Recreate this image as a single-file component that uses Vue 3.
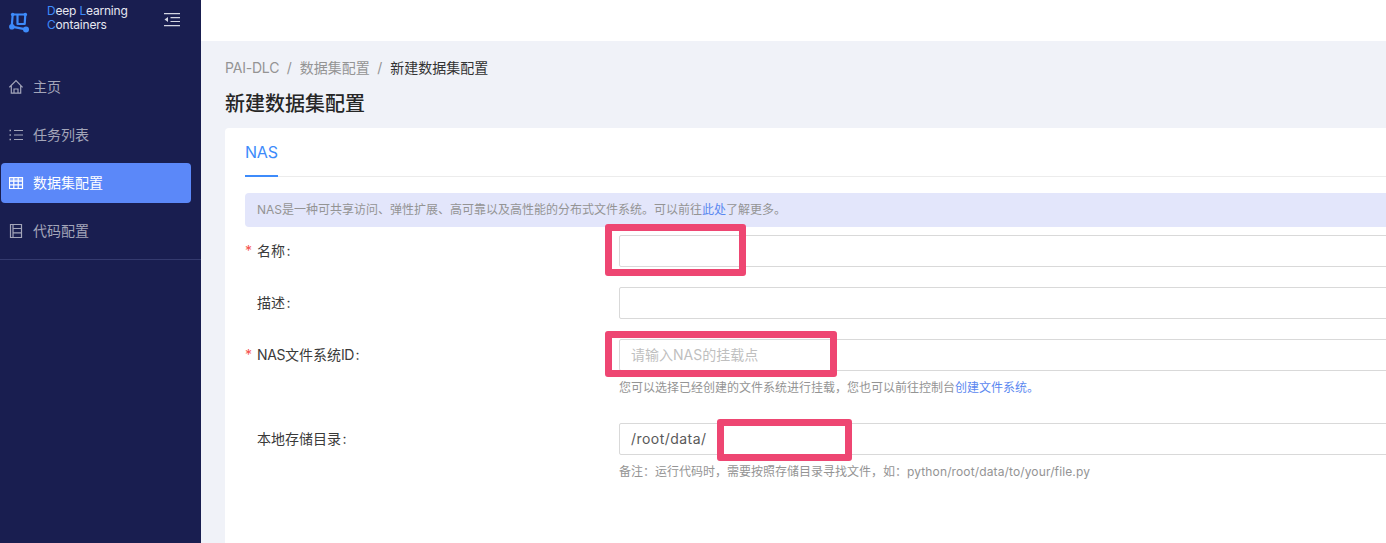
<script setup>
const menu = [
  { label: '主页', icon: 'home' },
  { label: '任务列表', icon: 'list' },
  { label: '数据集配置', icon: 'table', active: true },
  { label: '代码配置', icon: 'book' }
]
</script>

<template>
  <div class="page">
    <aside class="side">
      <div class="brand">
        <svg class="logo" width="20" height="22" viewBox="0 0 20 22" fill="none" stroke="#3d8bfb" stroke-width="2.200">
          <path d="M2.700 14.700 L3.700 2.500 L16.300 2.500 L15.700 12 H8.500 V2.500" stroke-linejoin="round" />
          <path d="M2.700 14.700 L17 17.300" />
          <circle cx="2.900" cy="14.700" r="2.800" fill="#3d8bfb" stroke="none" />
          <circle cx="17" cy="17.500" r="3" fill="#3d8bfb" stroke="none" />
          <circle cx="3.700" cy="2.500" r="1.800" fill="#3d8bfb" stroke="none" />
          <circle cx="16.300" cy="2.500" r="1.800" fill="#3d8bfb" stroke="none" />
        </svg>
        <div class="brand-text">
          <div><b>D</b>eep <b>L</b>earning</div>
          <div><b>C</b>ontainers</div>
        </div>
        <svg class="fold" width="16" height="14" viewBox="0 0 16 14" fill="none" stroke="#d3d5e2" stroke-width="1.200">
          <path d="M0 0.700H16M6.500 4.600H16M6.500 8.500H16M0 12.700H16" />
          <path d="M4 4V9L0.500 6.500Z" fill="#d3d5e2" stroke="none" />
        </svg>
      </div>
      <nav class="menu">
        <div v-for="m in menu" :key="m.label" class="item" :class="{ active: m.active }">
          <svg width="16" height="16" viewBox="0 0 16 16" fill="none" stroke="currentColor" stroke-width="1.200">
            <template v-if="m.icon === 'home'">
              <path d="M0.400 8.300 L7 1.500 L13.600 8.300 M2.300 6.800 V14.200 H11.700 V6.800 M5 14.200 V10 H9 V14.200" />
            </template>
            <template v-else-if="m.icon === 'list'">
              <path d="M5 3.500H14M5 8H14M5 12.500H14" />
              <path d="M0.500 3.500H2M0.500 8H2M0.500 12.500H2" stroke-width="1.500" />
            </template>
            <template v-else-if="m.icon === 'table'">
              <path d="M0.500 2.500H13.500V13.500H0.500ZM0.500 6.200H13.500M0.500 9.800H13.500M4.800 2.500V13.500M9.200 2.500V13.500" />
              <rect x="0.500" y="2.500" width="13" height="3.700" fill="currentColor" opacity=".35" stroke="none" />
            </template>
            <template v-else>
              <path d="M1.500 1.500H12.500V14.500H1.500ZM4 1.500V14.500M4 5.500H12.500M4 9.800H12.500" />
            </template>
          </svg>
          <span class="item-label">{{ m.label }}</span>
        </div>
      </nav>
      <div class="side-line"></div>
    </aside>

    <div class="main">
      <header class="top"></header>
      <div class="content">
        <div class="crumbs">
          <span>PAI-DLC</span><i>/</i><span>数据集配置</span><i>/</i><span class="cur">新建数据集配置</span>
        </div>
        <h1>新建数据集配置</h1>
        <section class="card">
          <div class="tabs"><div class="tab">NAS</div></div>
          <div class="alert">NAS是一种可共享访问、弹性扩展、高可靠以及高性能的分布式文件系统。可以前往<a>此处</a>了解更多。</div>

          <div class="row">
            <label><em>*</em>名称<s>:</s></label>
            <div class="field">
              <div class="input"></div>
              <div class="mark m1"></div>
            </div>
          </div>
          <div class="row">
            <label class="plain">描述<s>:</s></label>
            <div class="field"><div class="input"></div></div>
          </div>
          <div class="row with-help">
            <label><em>*</em><span class="tight">NAS</span>文件系统<span class="tight">ID</span><s>:</s></label>
            <div class="field">
              <div class="input ph">请输入NAS的挂载点</div>
              <div class="mark m3"></div>
              <p class="help">您可以选择已经创建的文件系统进行挂载，您也可以前往控制台<a>创建文件系统。</a></p>
            </div>
          </div>
          <div class="row">
            <label class="plain">本地存储目录<s>:</s></label>
            <div class="field">
              <div class="input val">/root/data/</div>
              <div class="mark m4"></div>
              <p class="help">备注：运行代码时，需要按照存储目录寻找文件，如：<span class="path">python/root/data/to/your/file.py</span></p>
            </div>
          </div>
        </section>
      </div>
    </div>
  </div>
</template>

<style>
html, body { margin: 0; overflow: hidden; }
</style>

<style scoped>
.page {
  display: flex;
  width: 1386px;
  height: 543px;
  overflow: hidden;
  font-family: Inter, "Noto Sans CJK SC", sans-serif;
  font-size: 14px;
  color: #333;
}
.side {
  flex: 0 0 201px;
  background: #191e50;
  color: #fff;
}
.brand {
  display: flex;
  align-items: flex-start;
  height: 41px;
}
.logo { margin: 12px 0 0 9px; }
.brand-text {
  margin: 4px 0 0 18px;
  font-size: 12px;
  line-height: 14px;
  letter-spacing: -0.2px;
  color: #e6e8f2;
  width: 117px;
}
.brand-text b { font-weight: 400; color: #3d8bfb; }
.fold { margin-top: 13px; }
.menu {
  margin-top: 26px;
  padding: 0 10px 0 1px;
}
.item {
  display: flex;
  align-items: center;
  height: 40px;
  margin-bottom: 8px;
  padding-left: 8px;
  gap: 8px;
  font-size: 14px;
  color: #a3a5b9;
  border-radius: 4px;
}
.item-label { padding-bottom: 2px; }
.item.active { background: #5b88f9; color: #fff; }
.side-line { height: 1px; background: #343a6e; margin-top: 5px; }
.main {
  flex: 1;
  min-width: 0;
  background: #f0f2f8;
}
.top { height: 41px; background: #fff; }
.content { padding: 18px 0 0 24px; width: 1500px; }
.crumbs {
  display: flex;
  height: 18px;
  line-height: 18px;
  font-size: 14px;
  color: #949494;
}
.crumbs span:first-child { letter-spacing: -0.2px; }
.crumbs i { font-style: normal; margin: 0 8px 0 7.500px; }
.crumbs .cur { color: #333; }
h1 {
  margin: 11px 0 0;
  height: 32px;
  line-height: 32px;
  font-size: 20px;
  font-weight: 500;
  color: #262626;
}
.card {
  margin-top: 8px;
  height: 500px;
  background: #fff;
  border-radius: 4px;
  padding: 0 20px;
}
.tabs {
  display: flex;
  height: 48px;
  border-bottom: 1px solid #ececec;
}
.tab {
  height: 47px;
  line-height: 48px;
  font-size: 16px;
  letter-spacing: -0.2px;
  color: #3d8bfb;
  border-bottom: 2px solid #3d8bfb;
}
.alert {
  margin-top: 16px;
  height: 34px;
  line-height: 34px;
  padding-left: 12px;
  background: #e3e6fb;
  border-radius: 4px;
  font-size: 12px;
  color: #949494;
}
a { color: #5b88f0; }
.row {
  display: flex;
  margin-top: 20px;
}
.alert + .row { margin-top: 8px; }
label {
  flex: 0 0 374px;
  height: 32px;
  line-height: 32px;
  font-size: 14px;
  color: #3a3a3a;
}
label s { text-decoration: none; margin-left: 1.500px; }
.tight { letter-spacing: -0.4px; }
label.plain { padding-left: 12px; flex-basis: 362px; }
label em {
  display: inline-block;
  width: 12px;
  font-style: normal;
  color: #f5524e;
}
.field { flex: 1; position: relative; }
.input {
  box-sizing: border-box;
  height: 32px;
  line-height: 30px;
  border: 1px solid #d9d9d9;
  border-radius: 2px;
  padding-left: 11px;
  font-size: 14px;
  background: #fff;
}
.input.ph { color: #bfbfbf; }
.input.val { color: #595959; letter-spacing: 0.45px; }
.help {
  margin: 8px 0 0;
  height: 18px;
  line-height: 18px;
  font-size: 12px;
  color: #949494;
}
.path { letter-spacing: 0.13px; }
.with-help + .row { margin-top: 26px; }
.mark {
  position: absolute;
  box-sizing: border-box;
  border: 7px solid #ee4672;
  border-radius: 3px;
}
.m1 { left: -14px; top: -11px; width: 141px; height: 52px; }
.m3 { left: -14px; top: -8px; width: 232px; height: 46px; }
.m4 { left: 98px; top: -4px; width: 135px; height: 42px; background: #fff; }
</style>
